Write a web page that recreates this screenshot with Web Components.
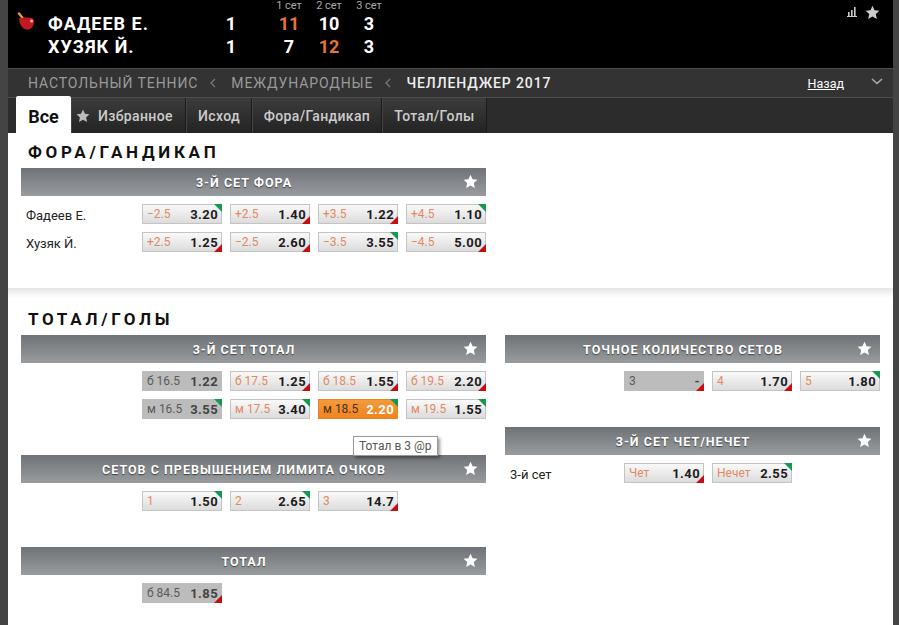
<!DOCTYPE html>
<html lang="ru">
<head>
<meta charset="utf-8">
<title>Челленджер 2017</title>
<style>
  html, body { margin: 0; height: 625px; overflow: hidden; background: #fff; }
  body { font-family: Roboto, "Liberation Sans", sans-serif; }
</style>
</head>
<body>
<x-app>
  <x-score></x-score>
  <x-crumbs></x-crumbs>
  <x-tabs></x-tabs>

  <x-section title="Фора/Гандикап">
    <x-market slot="left" title="3-й сет Фора" cols="4">
      <x-row label="Фадеев Е.">
        <x-odd name="−2.5" value="3.20" arrow="up"></x-odd>
        <x-odd name="+2.5" value="1.40" arrow="down"></x-odd>
        <x-odd name="+3.5" value="1.22" arrow="down"></x-odd>
        <x-odd name="+4.5" value="1.10" arrow="up"></x-odd>
      </x-row>
      <x-row label="Хузяк Й.">
        <x-odd name="+2.5" value="1.25" arrow="down"></x-odd>
        <x-odd name="−2.5" value="2.60" arrow="down"></x-odd>
        <x-odd name="−3.5" value="3.55" arrow="up"></x-odd>
        <x-odd name="−4.5" value="5.00" arrow="down"></x-odd>
      </x-row>
    </x-market>
  </x-section>

  <x-section title="Тотал/Голы" divided>
    <x-market slot="left" title="3-й сет Тотал" cols="4">
      <x-row>
        <x-odd name="б 16.5" value="1.22" state="off"></x-odd>
        <x-odd name="б 17.5" value="1.25" arrow="down"></x-odd>
        <x-odd name="б 18.5" value="1.55" arrow="down"></x-odd>
        <x-odd name="б 19.5" value="2.20" arrow="down"></x-odd>
      </x-row>
      <x-row>
        <x-odd name="м 16.5" value="3.55" state="off" arrow="up"></x-odd>
        <x-odd name="м 17.5" value="3.40" arrow="up"></x-odd>
        <x-odd name="м 18.5" value="2.20" state="on" arrow="up" tip="Тотал в 3 @p"></x-odd>
        <x-odd name="м 19.5" value="1.55" arrow="up"></x-odd>
      </x-row>
    </x-market>
    <x-market slot="left" title="Сетов с превышением лимита очков" cols="4">
      <x-row>
        <x-odd name="1" value="1.50" arrow="up"></x-odd>
        <x-odd name="2" value="2.65" arrow="up"></x-odd>
        <x-odd name="3" value="14.7" arrow="down"></x-odd>
      </x-row>
    </x-market>
    <x-market slot="left" title="Тотал" cols="4">
      <x-row>
        <x-odd name="б 84.5" value="1.85" state="off" arrow="down"></x-odd>
      </x-row>
    </x-market>

    <x-market slot="right" title="Точное количество сетов" cols="3">
      <x-row>
        <x-odd name="3" value="-" state="off" arrow="down"></x-odd>
        <x-odd name="4" value="1.70" arrow="down"></x-odd>
        <x-odd name="5" value="1.80" arrow="up"></x-odd>
      </x-row>
    </x-market>
    <x-market slot="right" title="3-й сет Чет/Нечет" cols="3">
      <x-row label="3-й сет">
        <x-odd name="Чет" value="1.40" arrow="down"></x-odd>
        <x-odd name="Нечет" value="2.55" arrow="up"></x-odd>
      </x-row>
    </x-market>
  </x-section>
</x-app>

<script>
// same star everywhere, only size and colour change
const STAR = size => `<svg width="${size}" height="${size}" viewBox="0 0 24 24" aria-hidden="true"><path fill="currentColor" d="M12 1l3.3 7.3 7.7.9-5.7 5.3 1.6 7.9L12 18.4l-6.9 4 1.6-7.9L1 9.2l7.7-.9z"/></svg>`;

class XApp extends HTMLElement {
  constructor() {
    super();
    this.attachShadow({ mode: 'open' }).innerHTML = `
      <style>
        :host { display: block; margin: 0 6px 0 8px; }
      </style>
      <slot></slot>`;
    // page side rails
    document.documentElement.style.background = 'linear-gradient(90deg,#444 8px,#fff 8px,#fff 893px,#444 893px)';
    document.body.style.background = 'transparent';
  }
}

class XScore extends HTMLElement {
  constructor() {
    super();
    this.attachShadow({ mode: 'open' }).innerHTML = `
      <style>
        :host { display: flex; justify-content: space-between; height: 68px; background: #000; color: #fff; box-sizing: border-box; }
        .left { display: flex; }
        .ball { margin: 12px 0 0 9px; width: 18px; height: 18px; }
        .grid {
          display: grid;
          margin-left: 13px;
          grid-template-columns: 168px 30px 23px 40px 40px 40px;
          grid-template-rows: 11px 24px 22px;
          align-items: center;
          text-align: center;
          font-weight: 700;
          font-size: 18px;
        }
        .head { font-size: 11px; font-weight: 400; color: #aaa; line-height: 12px; }
        .name { text-align: left; letter-spacing: 1px; }
        .hot { color: #e8733a; }
        .tools { display: flex; gap: 8px; margin: 4px 13px 0 0; color: #ccc; height: 16px; align-items: center; }
      </style>
      <div class="left">
        <svg class="ball" viewBox="0 0 18 18" aria-hidden="true">
          <path d="M2 1.5l4 5" stroke="#e09a3a" stroke-width="2.4" stroke-linecap="round"/>
          <path fill="#c01a20" d="M2 6.5c4-1 9-1.500 13-.5 2 .5 2.500 3 1.800 5.500C16 15.500 13 18 9.500 17.500 5.500 17 2.500 12.500 2 6.500z"/>
          <circle cx="14.500" cy="9" r="1.500" fill="#f0b0a8"/>
        </svg>
        <div class="grid">
          <span></span><span></span><span></span>
          <span class="head">1 сет</span><span class="head">2 сет</span><span class="head">3 сет</span>
          <span class="name">ФАДЕЕВ Е.</span><span>1</span><span></span>
          <span class="hot">11</span><span>10</span><span>3</span>
          <span class="name">ХУЗЯК Й.</span><span>1</span><span></span>
          <span>7</span><span class="hot">12</span><span>3</span>
        </div>
      </div>
      <div class="tools">
        <svg width="10" height="10" viewBox="0 0 10 10" aria-hidden="true"><path fill="currentColor" d="M1 5h1.600v4H1zM4 3h1.600v6H4zM7 0h1.600v9H7zM0 9h10v1H0z"/></svg>
        ${STAR(15)}
      </div>`;
  }
}

class XCrumbs extends HTMLElement {
  constructor() {
    super();
    const arrow = `<svg class="sep" width="6" height="10" viewBox="0 0 6 10" aria-hidden="true"><path d="M5 1L1 5l4 4" fill="none" stroke="#777" stroke-width="1.3"/></svg>`;
    this.attachShadow({ mode: 'open' }).innerHTML = `
      <style>
        :host {
          display: flex; align-items: center; height: 30px; box-sizing: border-box;
          padding-left: 20px; background: #333;
          border-top: 1px solid #4d4d4d; border-bottom: 1px solid #4d4d4d;
          font-size: 14px; letter-spacing: .9px; color: #9a9a9a;
        }
        .sep { margin: 0 15px 0 12px; }
        .cur { color: #eee; font-weight: 500; }
        a { margin-left: auto; font-size: 12.5px; letter-spacing: 0; color: #fff; text-decoration: underline; }
        .down { margin: -4px 10px 0 27px; }
      </style>
      <span>НАСТОЛЬНЫЙ ТЕННИС</span>${arrow}
      <span>МЕЖДУНАРОДНЫЕ</span>${arrow}
      <span class="cur">ЧЕЛЛЕНДЖЕР 2017</span>
      <a href="#">Назад</a>
      <svg class="down" width="12" height="7" viewBox="0 0 12 7" aria-hidden="true"><path d="M1 1l5 4.500L11 1" fill="none" stroke="#aaa" stroke-width="1.600"/></svg>`;
  }
}

class XTabs extends HTMLElement {
  constructor() {
    super();
    this.attachShadow({ mode: 'open' }).innerHTML = `
      <style>
        :host {
          display: flex; height: 35px; padding-left: 8px; background: #2c2c2c;
          font-size: 14px; font-weight: 500; letter-spacing: .35px; color: #ccc;
        }
        .tab {
          display: flex; align-items: center; justify-content: center; gap: 8px; box-sizing: border-box;
          background: linear-gradient(#3c3c3c, #232323); border-right: 1px solid #1a1a1a; border-left: 1px solid #444;
        }
        .all {
          background: #fff; color: #111; font-size: 18px; font-weight: 700; width: 55px;
          height: 37px; margin-top: -2px; padding-top: 4px; border: 0; letter-spacing: 0;
          border-radius: 2px 2px 0 0;
        }
        .fav { justify-content: flex-start; padding-left: 4px; }
        svg { color: #bbb; }
      </style>
      <div class="tab all">Все</div>
      <div class="tab fav" style="width:115px">${STAR(14)}Избранное</div>
      <div class="tab" style="width:66px">Исход</div>
      <div class="tab" style="width:130px">Фора/Гандикап</div>
      <div class="tab" style="width:105px">Тотал/Голы</div>`;
  }
}

class XSection extends HTMLElement {
  constructor() {
    super();
    this.attachShadow({ mode: 'open' }).innerHTML = `
      <style>
        :host { display: block; background: #fff; }
        :host([divided]) { padding-top: 12px; background: linear-gradient(#e6e6e6, #fff 10px); }
        h2 {
          margin: 0; height: 35px; padding: 9px 0 0 20px; box-sizing: border-box;
          font-size: 17px; line-height: 20px; font-weight: 700; letter-spacing: 3.7px;
          color: #111; text-transform: uppercase;
        }
        .cols { display: flex; gap: 19px; padding: 0 13px; }
        .col { width: 465px; flex: none; }
        .col + .col { width: 375px; }
      </style>
      <h2></h2>
      <div class="cols">
        <div class="col"><slot name="left"></slot></div>
        <div class="col"><slot name="right"></slot></div>
      </div>`;
    this.shadowRoot.querySelector('h2').textContent = this.getAttribute('title');
    this.removeAttribute('title');
  }
}

class XMarket extends HTMLElement {
  constructor() {
    super();
    this.attachShadow({ mode: 'open' }).innerHTML = `
      <style>
        :host { display: block; margin-bottom: 36px; }
        header {
          display: flex; align-items: center; justify-content: center; position: relative; height: 28px;
          padding-right: 19px; padding-top: 1px; box-sizing: border-box;
          background: linear-gradient(#6f7276, #999c9f);
          color: #fff; font-size: 12.5px; font-weight: 700; letter-spacing: 1px;
          text-transform: uppercase; text-shadow: 0 1px 1px rgba(0,0,0,.55);
        }
        svg { position: absolute; right: 8px; top: 6px; }
        .rows { display: grid; gap: 8px; padding-top: 8px; }
      </style>
      <header><span></span>${STAR(15)}</header>
      <div class="rows"><slot></slot></div>`;
    this.shadowRoot.querySelector('header span').textContent = this.getAttribute('title');
    this.removeAttribute('title');
    this.style.setProperty('--cols', this.getAttribute('cols'));
  }
}

class XRow extends HTMLElement {
  constructor() {
    super();
    this.attachShadow({ mode: 'open' }).innerHTML = `
      <style>
        :host {
          display: grid; grid-template-columns: 1fr repeat(var(--cols), 80px); column-gap: 8px; align-items: center;
        }
        .label { padding: 2px 0 0 5px; font-size: 13px; color: #222; }
      </style>
      <span class="label"></span><slot></slot>`;
    this.shadowRoot.querySelector('.label').textContent = this.getAttribute('label') || '';
  }
}

class XOdd extends HTMLElement {
  constructor() {
    super();
    this.attachShadow({ mode: 'open' }).innerHTML = `
      <style>
        :host {
          display: flex; position: relative; justify-content: space-between; align-items: center;
          height: 20px; box-sizing: border-box; padding: 0 3px 0 4px;
          background: linear-gradient(#f9f9f9, #dcdcdc); border: 1px solid #c4c4c4;
          font-size: 12px; color: #e08a62; white-space: nowrap;
        }
        b { font-size: 13px; letter-spacing: .4px; color: #1c1c1c; }
        :host([state="off"]) { background: #bcbcbc; border-color: #bcbcbc; color: #5a5a5a; }
        :host([state="off"]) b { color: #444; }
        :host([state="on"]) { background: linear-gradient(#f59a3c, #ee8420); border-color: #e98422; color: #4a3020; z-index: 2; }
        :host([state="on"]) b { color: #fff; }
        i { position: absolute; right: -1px; width: 0; height: 0; border-style: solid; }
        i.up { top: -1px; border-width: 0 8px 8px 0; border-color: transparent #149a4e transparent transparent; }
        i.down { bottom: -1px; border-width: 0 0 8px 8px; border-color: transparent transparent #c70d12 transparent; }
        .tip {
          position: absolute; left: 34px; top: 36px; padding: 0 5px; height: 20px; line-height: 19px; box-sizing: border-box;
          background: #fff; border: 1px solid #999; color: #555; font-size: 12px;
          box-shadow: 2px 2px 3px rgba(0,0,0,.4);
        }
      </style>
      <span class="n"></span><b></b>`;
    const root = this.shadowRoot;
    root.querySelector('.n').textContent = this.getAttribute('name');
    root.querySelector('b').textContent = this.getAttribute('value');
    const arrow = this.getAttribute('arrow');
    if (arrow) {
      const i = document.createElement('i');
      i.className = arrow;
      root.appendChild(i);
    }
    const tip = this.getAttribute('tip');
    if (tip) {
      const t = document.createElement('div');
      t.className = 'tip';
      t.textContent = tip;
      root.appendChild(t);
    }
  }
}

customElements.define('x-app', XApp);
customElements.define('x-score', XScore);
customElements.define('x-crumbs', XCrumbs);
customElements.define('x-tabs', XTabs);
customElements.define('x-section', XSection);
customElements.define('x-market', XMarket);
customElements.define('x-row', XRow);
customElements.define('x-odd', XOdd);
</script>
</body>
</html>
